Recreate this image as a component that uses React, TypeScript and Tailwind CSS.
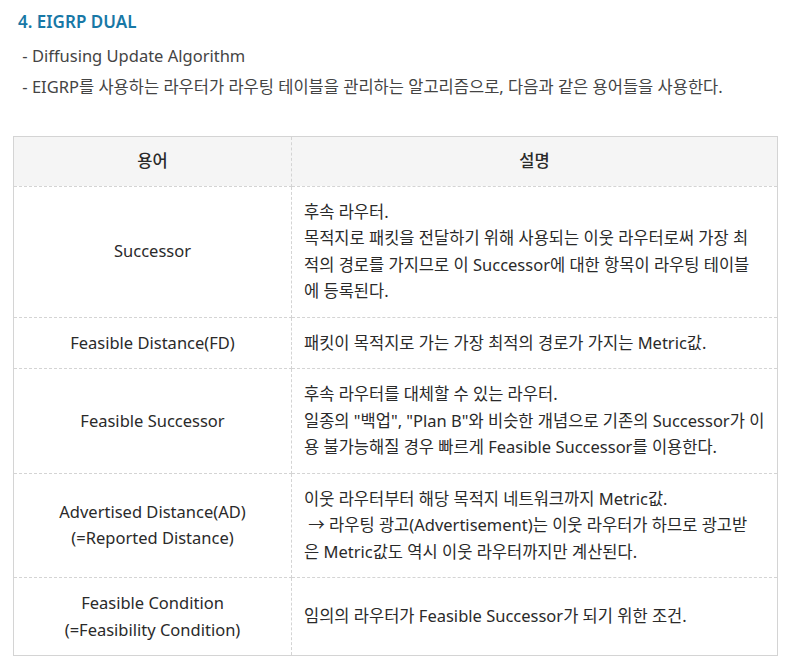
import React from "react";

const rows: { term: string[]; desc: string[] }[] = [
  {
    term: ["Successor"],
    desc: [
      "후속 라우터.",
      "목적지로 패킷을 전달하기 위해 사용되는 이웃 라우터로써 가장 최",
      "적의 경로를 가지므로 이 Successor에 대한 항목이 라우팅 테이블",
      "에 등록된다.",
    ],
  },
  {
    term: ["Feasible Distance(FD)"],
    desc: ["패킷이 목적지로 가는 가장 최적의 경로가 가지는 Metric값."],
  },
  {
    term: ["Feasible Successor"],
    desc: [
      "후속 라우터를 대체할 수 있는 라우터.",
      "일종의 \"백업\", \"Plan B\"와 비슷한 개념으로 기존의 Successor가 이",
      "용 불가능해질 경우 빠르게 Feasible Successor를 이용한다.",
    ],
  },
  {
    term: ["Advertised Distance(AD)", "(=Reported Distance)"],
    desc: [
      "이웃 라우터부터 해당 목적지 네트워크까지 Metric값.",
      "\u00a0→ 라우팅 광고(Advertisement)는 이웃 라우터가 하므로 광고받",
      "은 Metric값도 역시 이웃 라우터까지만 계산된다.",
    ],
  },
  {
    term: ["Feasible Condition", "(=Feasibility Condition)"],
    desc: ["임의의 라우터가 Feasible Successor가 되기 위한 조건."],
  },
];

export default function App() {
  return (
    <div
      className="bg-white min-h-[665px] w-[788px] px-[13px] pt-[10px] text-[#333]"
      style={{ fontFamily: '"Noto Sans", "Noto Sans CJK KR", sans-serif' }}
    >
      <div className="pl-[5px] text-[17px] font-semibold leading-[24px] text-[#1878a6]">
        4. EIGRP DUAL
      </div>
      <div className="pl-[5px] mt-[6px] text-[16.5px] leading-[31px] text-[#444]">
        <div>{"\u00a0- Diffusing Update Algorithm"}</div>
        <div>{"\u00a0- EIGRP를 사용하는 라우터가 라우팅 테이블을 관리하는 알고리즘으로, 다음과 같은 용어들을 사용한다."}</div>
      </div>
      <table className="mt-[34px] w-[765px] border-collapse border border-solid border-[#d4d4d4] text-[16.5px] leading-[26.5px] text-[#2a2a2a]">
        <colgroup>
          <col className="w-[278px]" />
          <col />
        </colgroup>
        <thead>
          <tr className="bg-[#f5f5f5]">
            <th className="border border-dashed border-[#d4d4d4] py-[11px] text-center font-medium">용어</th>
            <th className="border border-dashed border-[#d4d4d4] py-[11px] text-center font-medium">설명</th>
          </tr>
        </thead>
        <tbody>
          {rows.map((r, i) => (
            <tr key={i}>
              <td className="border border-dashed border-[#d4d4d4] px-3 py-3 text-center align-middle">
                {r.term.map((t, j) => (
                  <div key={j}>{t}</div>
                ))}
              </td>
              <td className="border border-dashed border-[#d4d4d4] px-3 py-3 text-left align-middle">
                {r.desc.map((t, j) => (
                  <div key={j} className="whitespace-nowrap">{t}</div>
                ))}
              </td>
            </tr>
          ))}
        </tbody>
      </table>
    </div>
  );
}
